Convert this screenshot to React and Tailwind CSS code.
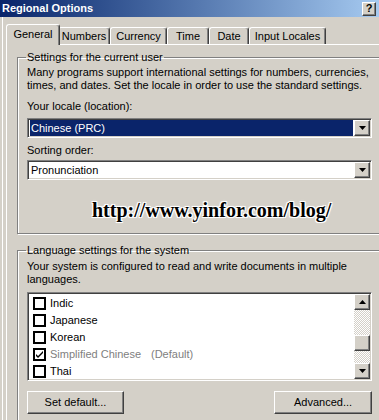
import React from 'react'

const raised =
  'border border-t-white border-l-white border-r-[#404040] border-b-[#404040] shadow-[inset_-1px_-1px_0_#808080]'
const sunken =
  'border border-t-[#808080] border-l-[#808080] border-r-white border-b-white shadow-[inset_1px_1px_0_#404040,inset_-1px_-1px_0_#d4d0c8]'

const tabs = [
  { label: 'General', w: 'w-[54px]', active: true },
  { label: 'Numbers', w: 'w-[52px]' },
  { label: 'Currency', w: 'w-[57px]' },
  { label: 'Time', w: 'w-[42px]' },
  { label: 'Date', w: 'w-[40px]' },
  { label: 'Input Locales', w: 'w-[77px]' },
]

const languages = [
  { name: 'Indic' },
  { name: 'Japanese' },
  { name: 'Korean' },
  { name: 'Simplified Chinese', note: '(Default)', checked: true, disabled: true },
  { name: 'Thai' },
]

function Arrow({ down = true }) {
  return (
    <svg width="7" height="4" viewBox="0 0 7 4" className="block">
      {down ? <path d="M0 0h7L3.5 4z" fill="#000" /> : <path d="M0 4h7L3.5 0z" fill="#000" />}
    </svg>
  )
}

function ArrowButton({ down = true }) {
  return (
    <div className={`w-[16px] h-[16px] shrink-0 bg-[#d4d0c8] flex items-center justify-center ${raised}`}>
      <Arrow down={down} />
    </div>
  )
}

function Combo({ value, selected }) {
  return (
    <div className={`w-[345px] h-[20px] bg-white flex items-stretch p-[1px] ${sunken}`}>
      <div className="flex-1 flex items-center pl-[1px] pr-[1px]">
        <div className={`flex-1 h-full flex items-center pl-[1px] ${selected ? 'bg-[#0a246a] text-white' : ''}`}>
          {value}
        </div>
      </div>
      <ArrowButton />
    </div>
  )
}

function Check({ checked }) {
  return (
    <div className="w-[13px] h-[13px] shrink-0 border-2 border-black bg-white flex items-center justify-center">
      {checked && (
        <svg width="7" height="7" viewBox="0 0 7 7">
          <path d="M0 3l2 2 5-5v2L2 7 0 5z" fill="#000" />
        </svg>
      )}
    </div>
  )
}

function Group({ title, children, className = '' }) {
  return (
    <fieldset
      className={`w-[365px] border border-[#808080] shadow-[inset_1px_1px_0_#fff,1px_1px_0_#fff] pl-[9px] ${className}`}
    >
      <legend className="-ml-[1px] px-[1px] leading-[13px]">{title}</legend>
      {children}
    </fieldset>
  )
}

export default function App() {
  return (
    <div className="w-[379px] h-[420px] overflow-hidden bg-[#d4d0c8] text-black text-[11px] font-['Liberation_Sans',Arial,sans-serif] leading-[13px]">
      {/* Title bar */}
      <div className="h-[17px] flex items-center justify-between bg-linear-to-r from-[#0a246a] to-[#a6caf0] pl-[2px] pr-[3px]">
        <span className="font-bold text-white text-[11px]">Regional Options</span>
        <div className={`w-[14px] h-[14px] bg-[#d4d0c8] flex items-center justify-center font-bold text-[11px] ${raised}`}>
          ?
        </div>
      </div>

      <div className="ml-[2px] border-l border-white pl-[3px]">
        {/* Tabs */}
        <div className="h-[27px] flex items-end pl-[2px]">
          {tabs.map((t) =>
            t.active ? (
              <div
                key={t.label}
                className={`relative z-10 -ml-[2px] -mr-[2px] -mb-[1px] ${t.w} h-[21px] bg-[#d4d0c8] flex items-center justify-center pb-[2px] rounded-t-[3px] border-t border-l border-white border-r border-r-[#404040] shadow-[inset_-1px_0_0_#808080]`}
              >
                {t.label}
              </div>
            ) : (
              <div
                key={t.label}
                className={`${t.w} h-[17px] flex items-center justify-center rounded-t-[3px] border-t border-l border-white border-r border-r-[#404040] shadow-[inset_-1px_0_0_#808080]`}
              >
                {t.label}
              </div>
            )
          )}
        </div>

        {/* Panel */}
        <div className="w-[392px] border-t border-l border-white pt-[6px] pl-[10px]">
          <Group title="Settings for the current user">
            <p className="mt-[2px]">
              Many programs support international settings for numbers, currencies,
              <br />
              times, and dates. Set the locale in order to use the standard settings.
            </p>
            <div className="mt-[8px]">Your locale (location):</div>
            <div className="mt-[5px]">
              <Combo value="Chinese (PRC)" selected />
            </div>
            <div className="mt-[6px]">Sorting order:</div>
            <div className="mt-[3px]">
              <Combo value="Pronunciation" />
            </div>
            <div className="pt-[21px] pb-[13px] pl-[65px]">
              <span className="block leading-[19px] text-[20px] font-bold font-['Liberation_Serif',serif] [text-shadow:1px_1px_0_#fff,-1px_-1px_0_#fff,1px_-1px_0_#fff,-1px_1px_0_#fff,0_0_3px_#fff]">
                http://www.yinfor.com/blog/
              </span>
            </div>
          </Group>

          <Group title="Language settings for the system" className="mt-[10px] pb-[20px]">
            <p className="mt-[3px]">
              Your system is configured to read and write documents in multiple
              <br />
              languages.
            </p>
            <div className={`mt-[6px] w-[345px] h-[89px] bg-white flex ${sunken} p-[1px]`}>
              <div className="flex-1 pl-[4px] pt-[1px]">
                {languages.map((l) => (
                  <div key={l.name} className="h-[17px] flex items-center gap-[4px]">
                    <Check checked={l.checked} />
                    <span className={`${l.disabled ? 'text-[#808080]' : ''} ${l.note ? 'w-[97px]' : ''}`}>{l.name}</span>
                    {l.note && <span className="text-[#808080]">{l.note}</span>}
                  </div>
                ))}
              </div>
              <div className="w-[16px] flex flex-col">
                <ArrowButton down={false} />
                <div className="flex-1 flex flex-col bg-[image:repeating-conic-gradient(#d4d0c8_0_25%,#ffffff_0_50%)] bg-[length:2px_2px]">
                  <div className="h-[25px]" />
                  <div className={`h-[16px] bg-[#d4d0c8] ${raised}`} />
                </div>
                <ArrowButton />
              </div>
            </div>
            <div className="mt-[10px] w-[345px] flex justify-between">
              <button className={`w-[97px] h-[23px] bg-[#d4d0c8] ${raised}`}>Set default...</button>
              <button className={`w-[98px] h-[23px] bg-[#d4d0c8] ${raised}`}>Advanced...</button>
            </div>
          </Group>
        </div>
      </div>
    </div>
  )
}
